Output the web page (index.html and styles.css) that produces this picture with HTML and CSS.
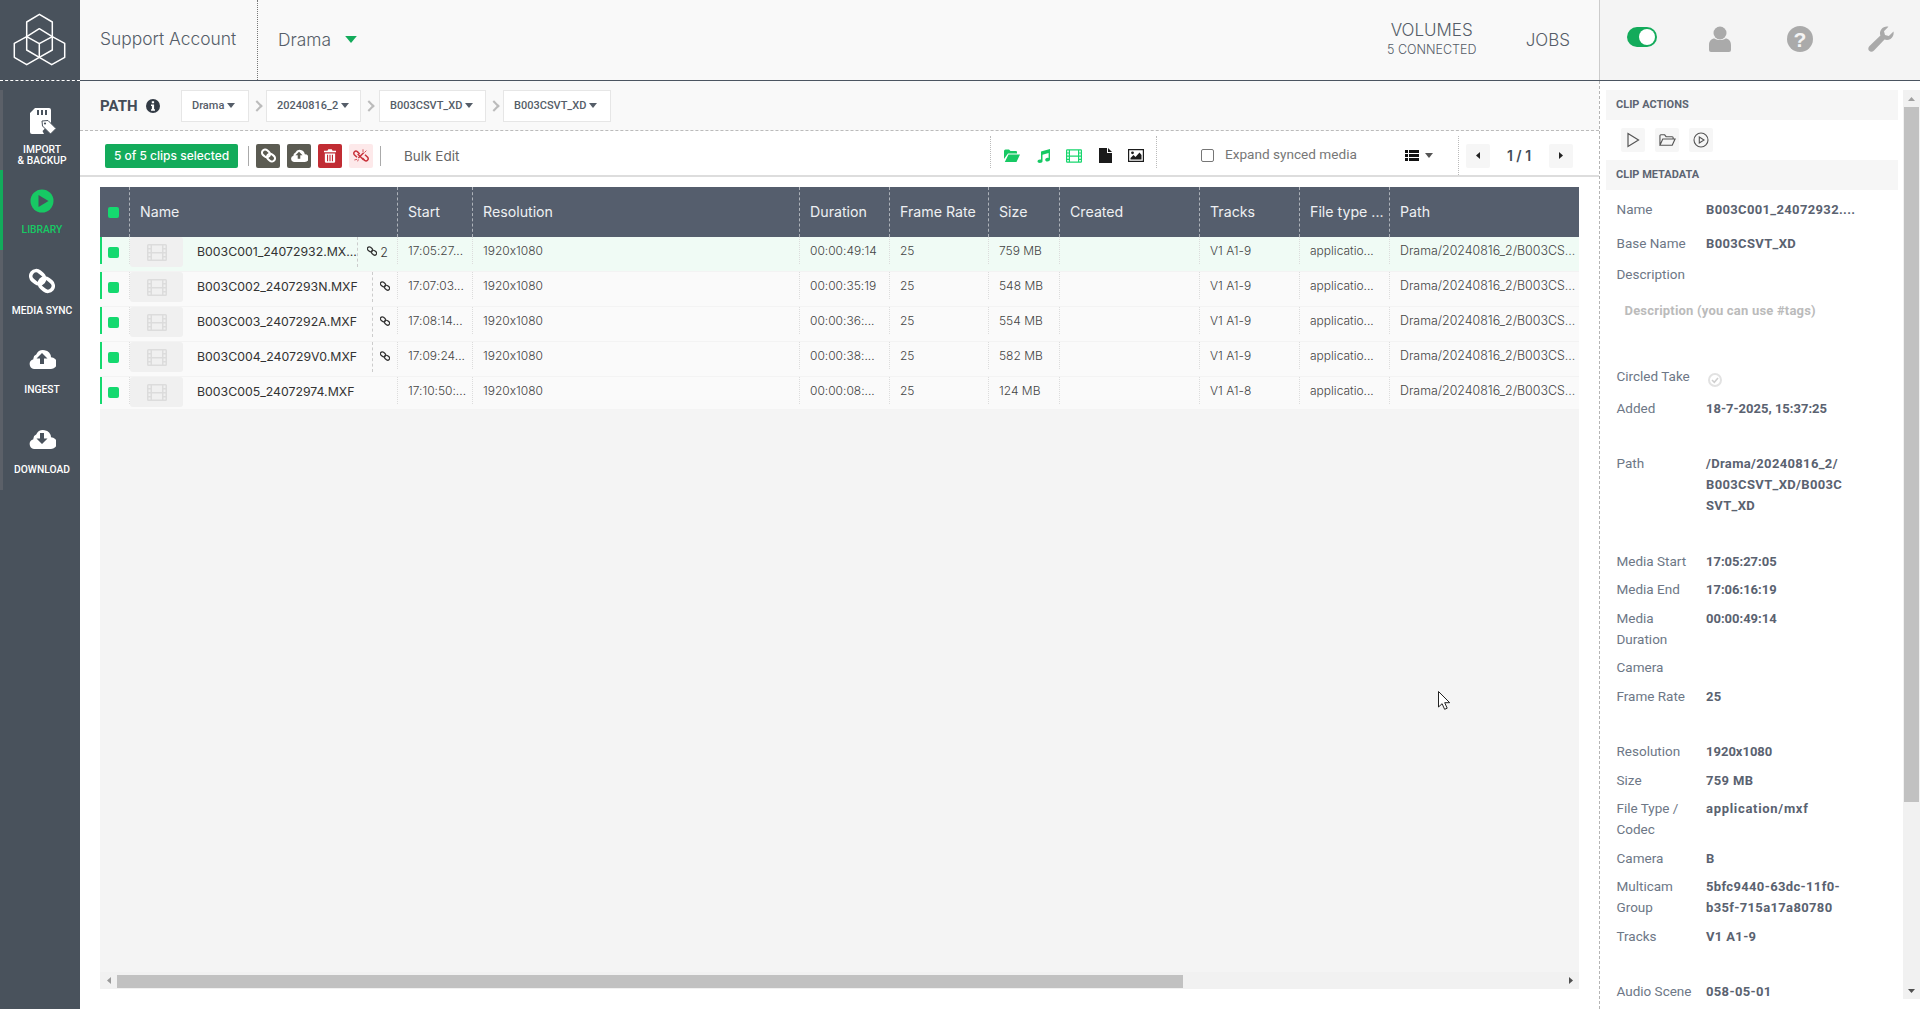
FILE: index.html
```html
<!DOCTYPE html>
<html lang="en">
<head>
<meta charset="utf-8">
<title>Library</title>
<link rel="stylesheet" href="styles.css">
</head>
<body>
<svg class="defs" width="0" height="0" aria-hidden="true">
  <symbol id="i-chain" viewBox="0 0 24 24"><g transform="rotate(40 12 12)" fill="none" stroke="currentColor" stroke-width="3.400"><rect x="0" y="7" width="13.500" height="10" rx="5"/><rect x="10.500" y="7" width="13.500" height="10" rx="5"/></g></symbol>
  <symbol id="i-link-sm" viewBox="0 0 12 12"><g transform="rotate(40 6 6)" fill="none" stroke="currentColor" stroke-width="1.500"><rect x="-.5" y="3.700" width="6.500" height="4.600" rx="2.300"/><rect x="6" y="3.700" width="6.500" height="4.600" rx="2.300"/></g></symbol>
  <symbol id="i-film" viewBox="0 0 20 17"><path fill-rule="evenodd" fill="currentColor" d="M1.500 0h17A1.500 1.500 0 0 1 20 1.500v14a1.500 1.500 0 0 1-1.500 1.500h-17A1.500 1.500 0 0 1 0 15.500v-14A1.500 1.500 0 0 1 1.500 0zM1.500 1.500V4h2V1.500zM1.500 5.500V8h2V5.500zM1.500 9.500V12h2V9.500zM1.500 13.500v2h2v-2zM16.500 1.500V4h2V1.500zM16.500 5.500V8h2V5.500zM16.500 9.500V12h2V9.500zM16.500 13.500v2h2v-2zM5 1.500V8h10V1.500zM5 9.500v6h10v-6z"/></symbol>
  <symbol id="i-cloud" viewBox="0 0 28 20"><path fill="currentColor" d="M23 8.200A7.800 7.800 0 0 0 8.200 5.600 4.500 4.500 0 0 0 5.400 10.200 5 5 0 0 0 6 20h17a5.800 5.800 0 0 0 0-11.800z"/></symbol>
  <symbol id="i-caret" viewBox="0 0 10 6"><path fill="currentColor" d="M0 0h10L5 6z"/></symbol>
</svg>

<div class="app">
  <nav class="sidebar">
    <div class="logo">
      <svg viewBox="0 0 80 80" width="80" height="80"><g fill="none" stroke="#fff" stroke-width="1.500" stroke-linejoin="round"><path d="M26.700 36.700V22l12.700-7.700L52.300 22v14.700"/><path d="M39.300 28.700l13 8V50L39.300 57.300 26.700 50V36.700z"/><path d="M26.700 36.700l12.600 7 13-7M39.300 43.700v13.600"/><path d="M26.700 36.700l-12.400 6.600V57.300l12.400 7.400 12.600-7.400 12.400 7.400 13-7.400V43.300l-12.400-6.600"/></g></svg>
    </div>
    <div class="nav-list">
      <a class="nav-item">
        <svg class="nav-icon" viewBox="0 0 28 28" width="28" height="28"><path fill="#fff" d="M7 1h14a2 2 0 0 1 2 2v12.500L14.500 24 16 27H4a2 2 0 0 1-2-2V6z"/><path fill="#49525c" d="M9 3h2v5H9zM13 3h2v5h-2zM17 3h2v5h-2z"/><path fill="#fff" stroke="#49525c" stroke-width="1" d="M14 14l6-.5 8 8-5.500 5.500-8-8z"/><circle cx="17" cy="16.500" r="1.100" fill="#49525c"/></svg>
        <span class="nav-label">IMPORT<br>&amp; BACKUP</span>
      </a>
      <a class="nav-item nav-item-active">
        <svg class="nav-icon" viewBox="0 0 24 24" width="24" height="24"><circle cx="12" cy="12" r="11.500" fill="#17c964"/><path fill="#49525c" d="M8.500 6l10 6-10 6z"/></svg>
        <span class="nav-label">LIBRARY</span>
      </a>
      <a class="nav-item">
        <svg class="nav-icon" width="26" height="26"><use href="#i-chain"/></svg>
        <span class="nav-label">MEDIA SYNC</span>
      </a>
      <a class="nav-item">
        <svg class="nav-icon cloud" viewBox="0 0 28 20" width="28" height="20"><use href="#i-cloud"/><path fill="#49525c" d="M14 4l5.500 5.500H16V15h-4V9.500H8.500z"/></svg>
        <span class="nav-label">INGEST</span>
      </a>
      <a class="nav-item">
        <svg class="nav-icon cloud" viewBox="0 0 28 20" width="28" height="20"><use href="#i-cloud"/><path fill="#49525c" d="M12 4h4v5.500h3.500L14 15 8.500 9.500H12z"/></svg>
        <span class="nav-label">DOWNLOAD</span>
      </a>
    </div>
  </nav>

  <div class="main">
    <header class="topbar">
      <div class="account">Support Account</div>
      <div class="project">Drama <svg class="project-caret" width="12" height="7"><use href="#i-caret"/></svg></div>
      <div class="top-links">
        <div class="volumes"><div class="volumes-title">VOLUMES</div><div class="volumes-sub">5 CONNECTED</div></div>
        <div class="jobs">JOBS</div>
      </div>
      <div class="top-tools">
        <span class="toggle"><span class="toggle-knob"></span></span>
        <svg class="tool tool-person" viewBox="0 0 22 26" width="22" height="26"><circle cx="11" cy="7" r="6.500" fill="#aaa"/><path fill="#aaa" d="M0 24v-5c0-4 2.500-6.500 5.500-6.500 3 2 8 2 11 0 3 0 5.500 2.500 5.500 6.500v5a2 2 0 0 1-2 2H2a2 2 0 0 1-2-2z"/></svg>
        <svg class="tool tool-help" viewBox="0 0 26 26" width="26" height="26"><circle cx="13" cy="13" r="13" fill="#aaa"/><text x="13" y="20.500" class="help-mark">?</text></svg>
        <svg class="tool tool-wrench" viewBox="0 0 26 26" width="26" height="26"><path fill="#aaa" d="M25.500 5.500c.6 3-.5 5.800-3 7.400-2 1.200-4 1.300-6 .6L6 24.500c-1.500 1.500-3.700 1.500-4.800.3-1.300-1.300-1.200-3.300.3-4.800L12.400 9.600c-.8-2.200-.5-4.500 1-6.400C15 1.100 17.700.2 20.400.7l-4.400 4.500 1 3.800 3.800 1z"/></svg>
      </div>
    </header>

    <div class="workspace">
      <section class="content">
        <div class="pathbar">
          <span class="path-title">PATH</span>
          <svg class="path-info" viewBox="0 0 14 14" width="14" height="14"><circle cx="7" cy="7" r="7" fill="#333b45"/><path fill="#fff" d="M5.800 2.200h2.300v2H5.800zM5 5.500h3.100v4.700H9v1.500H5v-1.500h.9V7H5z"/></svg>
          <div class="crumbs">
            <button class="crumb">Drama <svg class="crumb-caret" width="8" height="5"><use href="#i-caret"/></svg></button>
            <span class="crumb-sep"></span>
            <button class="crumb">20240816_2 <svg class="crumb-caret" width="8" height="5"><use href="#i-caret"/></svg></button>
            <span class="crumb-sep crumb-sep-wide"></span>
            <button class="crumb">B003CSVT_XD <svg class="crumb-caret" width="8" height="5"><use href="#i-caret"/></svg></button>
            <span class="crumb-sep"></span>
            <button class="crumb">B003CSVT_XD <svg class="crumb-caret" width="8" height="5"><use href="#i-caret"/></svg></button>
          </div>
        </div>

        <div class="toolbar">
          <span class="badge">5 of 5 clips selected</span>
          <span class="tb-sep"></span>
          <button class="tb-btn tb-dark"><svg width="15" height="15"><use href="#i-chain"/></svg></button>
          <button class="tb-btn tb-dark"><svg viewBox="0 0 28 20" width="18" height="13"><use href="#i-cloud"/><path fill="#5b5b52" d="M14 4l5.500 5.500H16V15h-4V9.500H8.500z"/></svg></button>
          <button class="tb-btn tb-red"><svg viewBox="0 0 14 16" width="12" height="14"><path fill="#fff" d="M5 0h4l1 2h4v1.500H0V2h4zM1 5h12v9.500a1.500 1.500 0 0 1-1.500 1.500h-9A1.500 1.500 0 0 1 1 14.500z"/><path fill="#c12c33" d="M3.500 6.500h1.300V14H3.500zM6.350 6.500h1.300V14h-1.300zM9.200 6.500h1.300V14H9.200z"/></svg></button>
          <button class="tb-btn tb-pink"><svg viewBox="0 0 24 24" width="16" height="16"><g fill="none" stroke="#c8323a" stroke-width="2.200"><path d="M10 9L6.500 5.500a3.200 3.200 0 0 0-4.500 4.500l4 4"/><path d="M14 15l3.500 3.500a3.200 3.200 0 0 0 4.500-4.500l-4-4"/><path d="M7 9l9 9M8 15l8-8"/></g><path stroke="#c8323a" stroke-width="1.200" d="M15 2v4M20 4l-3 3M2 18l4-1M7 20l1-3"/></svg></button>
          <span class="tb-sep tb-sep-end"></span>
          <span class="bulk">Bulk Edit</span>
          <div class="tb-filters">
            <svg class="f-icon" viewBox="0 0 16 13" width="16" height="13"><path fill="#17c964" d="M0 2a1.500 1.500 0 0 1 1.500-1.500H5L6.500 2H12a1 1 0 0 1 1 1v1.500H4L0 10zM4.500 5.500H16L12.500 13H.8z"/></svg>
            <svg class="f-icon" viewBox="0 0 13 14" width="13" height="14"><path fill="#17c964" d="M4 2.500L13 0v10.500c0 1.200-1.200 2-2.600 2s-2.200-.8-2.200-1.800 1-2 2.400-2c.4 0 .8 0 1 .2V4L5.500 5.700v6.600c0 1-1.100 1.700-2.600 1.700S.5 13.300.5 12.300s1-1.900 2.400-1.900c.4 0 .8.100 1.100.2z"/></svg>
            <svg class="f-icon f-film" width="16" height="14"><use href="#i-film"/></svg>
            <svg class="f-icon" viewBox="0 0 13 15" width="13" height="15"><path fill="#1b1b1b" d="M0 0h8v5h5v10H0zM9 0l4 4H9z"/></svg>
            <svg class="f-icon" viewBox="0 0 16 13" width="16" height="13"><path fill-rule="evenodd" fill="#1b1b1b" d="M0 0h16v13H0zM1.200 1.200v10.600h13.600V1.200z"/><path fill="#1b1b1b" d="M2.500 10.500V9l3-3 2 2 4-4.500 2 2.500v4.500z"/><circle cx="4.500" cy="3.800" r="1.400" fill="#1b1b1b"/></svg>
          </div>
          <label class="expand"><span class="check-box"></span>Expand synced media</label>
          <span class="view-toggle">
            <svg viewBox="0 0 14 11" width="14" height="11"><path fill="#111" d="M0 0h3v3H0zM4 0h10v3H4zM0 4h3v3H0zM4 4h10v3H4zM0 8h3v3H0zM4 8h10v3H4z"/></svg>
            <svg width="8" height="5"><use href="#i-caret"/></svg>
          </span>
          <div class="pager">
            <button class="pg-btn"><svg viewBox="0 0 4 7" width="4" height="7"><path fill="#222" d="M4 0v7L0 3.500z"/></svg></button>
            <span class="pg-text">1 / 1</span>
            <button class="pg-btn"><svg viewBox="0 0 4 7" width="4" height="7"><path fill="#222" d="M0 0v7l4-3.500z"/></svg></button>
          </div>
        </div>

        <div class="table-wrap">
          <div class="table">
            <div class="t-row t-head">
              <div class="h-cell h-check"><span class="sel"></span></div>
              <div class="h-cell">Name</div>
              <div class="h-cell">Start</div>
              <div class="h-cell">Resolution</div>
              <div class="h-cell">Duration</div>
              <div class="h-cell">Frame Rate</div>
              <div class="h-cell">Size</div>
              <div class="h-cell">Created</div>
              <div class="h-cell">Tracks</div>
              <div class="h-cell">File type ...</div>
              <div class="h-cell">Path</div>
            </div>
            <div class="t-body">
              <div class="t-row b-row b-row-first">
                <div class="mark"><span class="sel"></span></div>
                <div class="cell name-cell"><span class="thumb"><svg width="20" height="17"><use href="#i-film"/></svg></span><span class="clip-name">B003C001_24072932.MX...</span><span class="sync sync-wide"><svg width="10" height="10"><use href="#i-link-sm"/></svg> 2</span></div>
                <div class="cell">17:05:27...</div><div class="cell">1920x1080</div><div class="cell">00:00:49:14</div><div class="cell">25</div><div class="cell">759 MB</div><div class="cell"></div><div class="cell">V1 A1-9</div><div class="cell">applicatio...</div><div class="cell cell-path">Drama/20240816_2/B003CS...</div>
              </div>
              <div class="t-row b-row">
                <div class="mark"><span class="sel"></span></div>
                <div class="cell name-cell"><span class="thumb"><svg width="20" height="17"><use href="#i-film"/></svg></span><span class="clip-name">B003C002_2407293N.MXF</span><span class="sync"><svg width="10" height="10"><use href="#i-link-sm"/></svg></span></div>
                <div class="cell">17:07:03...</div><div class="cell">1920x1080</div><div class="cell">00:00:35:19</div><div class="cell">25</div><div class="cell">548 MB</div><div class="cell"></div><div class="cell">V1 A1-9</div><div class="cell">applicatio...</div><div class="cell cell-path">Drama/20240816_2/B003CS...</div>
              </div>
              <div class="t-row b-row">
                <div class="mark"><span class="sel"></span></div>
                <div class="cell name-cell"><span class="thumb"><svg width="20" height="17"><use href="#i-film"/></svg></span><span class="clip-name">B003C003_2407292A.MXF</span><span class="sync"><svg width="10" height="10"><use href="#i-link-sm"/></svg></span></div>
                <div class="cell">17:08:14...</div><div class="cell">1920x1080</div><div class="cell">00:00:36:...</div><div class="cell">25</div><div class="cell">554 MB</div><div class="cell"></div><div class="cell">V1 A1-9</div><div class="cell">applicatio...</div><div class="cell cell-path">Drama/20240816_2/B003CS...</div>
              </div>
              <div class="t-row b-row">
                <div class="mark"><span class="sel"></span></div>
                <div class="cell name-cell"><span class="thumb"><svg width="20" height="17"><use href="#i-film"/></svg></span><span class="clip-name">B003C004_240729V0.MXF</span><span class="sync"><svg width="10" height="10"><use href="#i-link-sm"/></svg></span></div>
                <div class="cell">17:09:24...</div><div class="cell">1920x1080</div><div class="cell">00:00:38:...</div><div class="cell">25</div><div class="cell">582 MB</div><div class="cell"></div><div class="cell">V1 A1-9</div><div class="cell">applicatio...</div><div class="cell cell-path">Drama/20240816_2/B003CS...</div>
              </div>
              <div class="t-row b-row b-row-last">
                <div class="mark"><span class="sel"></span></div>
                <div class="cell name-cell"><span class="thumb"><svg width="20" height="17"><use href="#i-film"/></svg></span><span class="clip-name">B003C005_24072974.MXF</span></div>
                <div class="cell">17:10:50:...</div><div class="cell">1920x1080</div><div class="cell">00:00:08:...</div><div class="cell">25</div><div class="cell">124 MB</div><div class="cell"></div><div class="cell">V1 A1-8</div><div class="cell">applicatio...</div><div class="cell cell-path">Drama/20240816_2/B003CS...</div>
              </div>
            </div>
            <div class="hscroll">
              <span class="hs-arrow"><svg viewBox="0 0 4 7" width="4" height="7"><path fill="#9a9a9a" d="M4 0v7L0 3.500z"/></svg></span>
              <span class="hs-thumb"></span>
              <span class="hs-arrow hs-arrow-end"><svg viewBox="0 0 4 7" width="4" height="7"><path fill="#505050" d="M0 0v7l4-3.500z"/></svg></span>
            </div>
          </div>
        </div>
      </section>

      <aside class="panel">
        <div class="panel-body">
          <h3 class="panel-head">CLIP ACTIONS</h3>
          <div class="actions">
            <button class="act"><svg viewBox="0 0 14 16" width="14" height="16"><path fill="none" stroke="#555" stroke-width="1.200" d="M2 1.500l10.500 6.500L2 14.500z"/></svg></button>
            <button class="act"><svg viewBox="0 0 18 14" width="17" height="14"><path fill="none" stroke="#555" stroke-width="1.200" d="M1 12V2.500A1 1 0 0 1 2 1.500h4l1.500 2H14a1 1 0 0 1 1 1V6M1 12.500L4 6h13l-3 6.500z"/></svg></button>
            <button class="act"><svg viewBox="0 0 16 16" width="16" height="16"><circle cx="8" cy="8" r="7" fill="none" stroke="#555" stroke-width="1.100"/><path fill="none" stroke="#555" stroke-width="1.100" d="M6.300 5l4.700 3-4.700 3z"/></svg></button>
          </div>
          <h3 class="panel-head panel-head-meta">CLIP METADATA</h3>
          <dl class="meta">
            <div class="m-row m-name"><dt>Name</dt><dd>B003C001_24072932....</dd></div>
            <div class="m-row m-base"><dt>Base Name</dt><dd>B003CSVT_XD</dd></div>
            <div class="m-row m-desc"><dt>Description</dt><dd></dd></div>
            <div class="m-placeholder">Description (you can use #tags)</div>
            <div class="m-row m-circled"><dt>Circled Take</dt><dd><svg class="circled" viewBox="0 0 14 14" width="14" height="14"><circle cx="7" cy="7" r="6" fill="none" stroke="#e2e2e2" stroke-width="2"/><path fill="none" stroke="#cfcfcf" stroke-width="1.600" d="M4 7l2.300 2.300L10 5"/></svg></dd></div>
            <div class="m-row m-gap"><dt>Added</dt><dd class="m-tight">18-7-2025, 15:37:25</dd></div>
            <div class="m-row m-gap"><dt>Path</dt><dd>/Drama/20240816_2/<br>B003CSVT_XD/B003C<br>SVT_XD</dd></div>
            <div class="m-row"><dt>Media Start</dt><dd class="m-tight">17:05:27:05</dd></div>
            <div class="m-row"><dt>Media End</dt><dd class="m-tight">17:06:16:19</dd></div>
            <div class="m-row"><dt>Media<br>Duration</dt><dd class="m-tight">00:00:49:14</dd></div>
            <div class="m-row"><dt>Camera</dt><dd></dd></div>
            <div class="m-row m-gap"><dt>Frame Rate</dt><dd>25</dd></div>
            <div class="m-row"><dt>Resolution</dt><dd class="m-tight">1920x1080</dd></div>
            <div class="m-row"><dt>Size</dt><dd>759 MB</dd></div>
            <div class="m-row"><dt>File Type /<br>Codec</dt><dd class="m-loose">application/mxf</dd></div>
            <div class="m-row"><dt>Camera</dt><dd>B</dd></div>
            <div class="m-row"><dt>Multicam<br>Group</dt><dd>5bfc9440-63dc-11f0-<br>b35f-715a17a80780</dd></div>
            <div class="m-row m-gap"><dt>Tracks</dt><dd>V1 A1-9</dd></div>
            <div class="m-row"><dt>Audio Scene</dt><dd>058-05-01</dd></div>
          </dl>
        </div>
        <div class="vscroll">
          <span class="vs-arrow"><svg viewBox="0 0 7 4" width="7" height="4"><path fill="#a0a0a0" d="M0 4h7L3.500 0z"/></svg></span>
          <span class="vs-thumb"></span>
          <span class="vs-arrow vs-arrow-end"><svg viewBox="0 0 7 4" width="7" height="4"><path fill="#505050" d="M0 0h7L3.500 4z"/></svg></span>
        </div>
      </aside>
    </div>
  </div>
  <svg class="cursor" viewBox="0 0 12 19" width="12" height="19"><path fill="#fff" stroke="#222" stroke-width="1" d="M.5.500v15.500l3.600-3.300 2.500 5.600 2.600-1.100-2.500-5.500h5z"/></svg>
</div>
</body>
</html>
```

FILE: styles.css
```css
* { box-sizing: border-box; }
html, body { margin: 0; height: 100%; overflow: hidden; }
body { font-family: "Inter", "Liberation Sans", sans-serif; font-feature-settings: "calt" 0; color: #555; background: #fff; }
button { font: inherit; border: 0; padding: 0; cursor: pointer; }
.defs { position: absolute; }

.app { position: relative; display: flex; width: 1920px; height: 1009px; }

/* sidebar */
.sidebar { width: 80px; flex: none; background: #49525c; display: flex; flex-direction: column; }
.logo { height: 81px; border-bottom: 1px dashed #fff; }
.logo svg { display: block; }
.nav-list { margin-top: 9px; border-left: 3px solid #5b6068; display: flex; flex-direction: column; }
.nav-item { height: 80px; margin-left: -3px; border-left: 3px solid transparent; display: flex; flex-direction: column; align-items: center; color: #fff; padding-left: 1px; position: relative; }
.nav-item-active { border-left-color: #13ab5b; color: #17c964; }
.nav-icon { display: block; margin-top: 17px; flex: none; height: 28px; }
.nav-icon.cloud { margin-top: 19px; height: 20px; }
.nav-item:nth-child(2) .nav-icon { margin-top: 19px; height: 24px; }
.nav-item:nth-child(3) .nav-icon { margin-top: 18px; height: 26px; }
.nav-label { font-family: "Roboto", sans-serif; font-size: 10.300px; line-height: 11px; font-weight: 500; text-align: center; margin-top: 10px; }
.nav-item:nth-child(1) .nav-label { margin-top: 9px; }
.nav-item:nth-child(2) .nav-label { margin-top: 11px; }
.nav-item:nth-child(3) .nav-label { margin-top: 11px; }
.nav-item.nav-item .cloud + .nav-label { margin-top: 15px; }

/* top bar */
.main { flex: 1; min-width: 0; display: flex; flex-direction: column; }
.topbar { height: 81px; flex: none; background: #f9f9f9; border-bottom: 1px solid #4b5561; display: flex; align-items: stretch; }
.account { width: 178px; padding-left: 20px; border-right: 1px dotted #777; font-size: 17.400px; font-weight: 300; line-height: 78px; color: #555d68; white-space: nowrap; }
.project { padding-left: 20px; padding-bottom: 2px; font-size: 17.400px; font-weight: 300; color: #555d68; display: flex; align-items: center; gap: 14px; }
.project-caret { color: #13ab5b; }
.top-links { margin-left: auto; display: flex; align-items: center; color: #555d68; font-weight: 300; }
.volumes { text-align: center; width: 92px; margin-top: -2px; }
.volumes-title { font-size: 17px; line-height: 20px; }
.volumes-sub { font-size: 12.500px; line-height: 16px; margin-top: 2px; }
.jobs { font-size: 17px; margin-left: 48px; margin-right: 29px; }
.top-tools { width: 321px; background: #f4f4f4; border-left: 1px solid #ccc; display: flex; align-items: center; position: relative; }
.toggle { width: 30px; height: 20px; border-radius: 10px; background: #13ab5b; margin-left: 27px; margin-top: -7px; display: block; padding: 2px 1px 2px 12px; flex: none; }
.toggle-knob { display: block; width: 16px; height: 16px; border-radius: 50%; background: #fff; }
.tool { flex: none; margin-top: -2px; }
.tool-person { margin-left: 52px; }
.tool-help { margin-left: 56px; }
.tool-wrench { margin-left: 55px; }
.help-mark { font-family: "Liberation Sans", sans-serif; font-size: 21px; font-weight: 700; fill: #f4f4f4; text-anchor: middle; }

/* workspace */
.workspace { flex: 1; min-height: 0; display: flex; }
.content { width: 1520px; flex: none; border-right: 1px dashed #b5b5b5; display: flex; flex-direction: column; }
.pathbar { height: 50px; flex: none; background: #f9f9f9; border-bottom: 1px dashed #bbb; display: flex; align-items: center; padding-left: 20px; }
.path-title { font-family: "Roboto", sans-serif; font-weight: 700; font-size: 15px; color: #444c57; width: 46px; }
.path-info { flex: none; }
.crumbs { display: flex; align-items: center; margin-left: 21px; }
.crumb { height: 32px; padding: 0 0 1px 10px; background: #fff; border: 1px solid #e6e6e6; font-family: "Roboto", sans-serif; font-size: 11px; font-weight: 500; color: #555d68; display: flex; align-items: center; gap: 3px; white-space: nowrap; }
.crumb:nth-child(1) { width: 68px; }
.crumb:nth-child(3) { width: 95px; }
.crumb:nth-child(5) { width: 107px; }
.crumb:nth-child(7) { width: 108px; }
.crumb-caret { color: #555d68; flex: none; }
.crumb-sep { width: 17px; height: 10px; position: relative; flex: none; }
.crumb-sep-wide { width: 18px; }
.crumb-sep::before { content: ""; position: absolute; left: 4px; top: 1px; width: 6px; height: 6px; border-top: 2px solid #bbb; border-right: 2px solid #bbb; transform: rotate(45deg); }

.toolbar { height: 46px; flex: none; background: #fff; border-bottom: 2px solid #ddd; display: flex; align-items: center; padding: 5px 0 0 25px; }
.badge { width: 133px; height: 24px; background: #13ab5b; border-radius: 2px; color: #fff; font-size: 12px; font-weight: 500; line-height: 24px; text-align: center; flex: none; }
.tb-sep { width: 1px; height: 20px; background: #aaa; margin: 0 7px 0 10px; flex: none; }
.tb-sep-end { margin-left: 7px; margin-right: 0; }
.tb-btn { width: 24px; height: 24px; border-radius: 2px; margin-right: 7px; display: flex; align-items: center; justify-content: center; color: #fff; flex: none; }
.tb-dark { background: #5b5b52; }
.tb-red { background: #c12c33; }
.tb-pink { background: #fde9ea; margin-right: 0; }
.bulk { font-size: 13.500px; color: #666; margin-left: 23px; width: 65px; white-space: nowrap; }
.tb-filters { margin-left: 521px; width: 167px; height: 32px; align-self: flex-start; border-left: 1px dotted #bbb; border-right: 1px dotted #bbb; display: flex; align-items: center; padding: 7px 0 0 13px; flex: none; }
.f-icon { flex: none; margin-right: 16.500px; }
.f-film { color: #17d66d; }
.expand { display: flex; align-items: center; font-family: "Roboto", sans-serif; font-size: 13.600px; color: #777; margin-left: 44px; width: 203.500px; margin-top: -3px; white-space: nowrap; }
.check-box { width: 13px; height: 13px; border: 1px solid #767676; border-radius: 2px; background: #fff; margin-right: 11px; margin-top: 3px; flex: none; }
.view-toggle { display: flex; align-items: center; gap: 6px; width: 53px; flex: none; }
.pager { height: 39px; align-self: flex-start; padding-left: 7px; border-left: 1px dotted #bbb; display: flex; align-items: center; flex: none; }
.pg-btn { width: 24px; height: 24px; background: #f6f6f6; border-radius: 2px; display: flex; align-items: center; justify-content: center; flex: none; }
.pg-text { width: 59px; text-align: center; font-size: 14px; font-weight: 600; color: #444c57; }

/* table */
.table-wrap { flex: 1; min-height: 0; padding: 10px 20px 20px 20px; background: #fff; }
.table { height: 100%; display: flex; flex-direction: column; }
.t-row { display: grid; grid-template-columns: 29px 268px 75px 327px 90px 99px 71px 140px 100px 90px 190px; }
.t-head { height: 50px; flex: none; background: #555e6d; color: #eef0f2; }
.h-cell { border-left: 1px dashed #aeb3ba; padding-left: 10px; font-size: 14.200px; line-height: 49px; white-space: nowrap; overflow: hidden; }
.h-check { border-left: 0; padding: 20px 0 0 8px; }
.sel { display: block; width: 11px; height: 11px; border-radius: 2px; background: #15d96f; }
.t-body { flex: 1; min-height: 0; background: #f4f4f4; }
.b-row { height: 35px; background: #fafafa; border-bottom: 1px solid #f3f3f3; }
.b-row-first { background: #f0fbf5; }
.b-row-last { height: 32px; border-bottom: 0; }
.mark { height: 27px; border-left: 2px solid #15d96f; padding: 10px 0 0 6px; }
.cell { height: 27px; border-left: 1px dotted #dcdcdc; padding-left: 10px; font-size: 12px; font-weight: 300; line-height: 27px; color: #444; white-space: nowrap; overflow: hidden; }
.cell-path { font-size: 12.400px; }
.name-cell { overflow: visible; display: flex; padding-left: 0; position: relative; border-left: 1px dotted #dcdcdc; }
.thumb { width: 53px; height: 30px; background: #f0f0f0; border-radius: 3px; display: flex; align-items: center; justify-content: center; color: #dcdcdc; flex: none; margin-top: 0; }
.clip-name { margin-left: 14px; font-size: 12.300px; font-weight: 400; color: #333; line-height: 30px; }
.sync { position: absolute; right: 0; top: 0; width: 25px; height: 30px; border-left: 1px dashed #ccc; display: flex; align-items: center; justify-content: center; color: #333; font-size: 12.500px; gap: 3px; }
.sync svg { margin-top: -3px; }
.sync-wide { width: 40px; }
.hscroll { height: 17px; flex: none; background: #f1f1f1; display: flex; align-items: center; }
.hs-arrow { width: 17px; display: flex; justify-content: center; flex: none; }
.hs-thumb { width: 1066px; height: 13px; background: #c1c1c1; flex: none; margin-top: 1px; }
.hs-arrow-end { margin-left: auto; }

/* side panel */
.panel { flex: 1; min-width: 0; display: flex; overflow: hidden; background: #fff; }
.panel-body { width: 303px; flex: none; padding: 9px 5px 0 6px; overflow: hidden; }
.panel-head { margin: 0; height: 30px; background: #f6f6f6; font-family: "Roboto", sans-serif; font-size: 11px; line-height: 29px; font-weight: 700; color: #5d6572; padding-left: 10px; }
.actions { display: flex; gap: 10px; padding: 8px 0 8px 15px; }
.act { width: 24px; height: 24px; background: #f6f6f6; border-radius: 2px; display: flex; align-items: center; justify-content: center; }
.meta { margin: 8.500px 0 0 10.500px; font-family: "Roboto", sans-serif; font-size: 14px; line-height: 21px; }
.m-row { display: grid; grid-template-columns: 89.500px 1fr; margin-bottom: 7.500px; }
.m-row dt { color: #6d7786; font-size: 13.500px; }
.m-row dd { margin: 0; color: #5a6270; font-weight: 700; font-size: 13px; white-space: nowrap; letter-spacing: .35px; }
.m-row .m-tight { letter-spacing: 0; }
.m-row .m-loose { letter-spacing: .7px; }
.m-name { margin-bottom: 13px; }
.m-base { margin-bottom: 10px; }
.m-desc { margin-bottom: 15px; }
.m-placeholder { margin-left: 8px; height: 21px; color: #bbb; font-weight: 700; font-size: 13px; letter-spacing: .2px; margin-bottom: 45px; }
.m-circled { margin-bottom: 11px; }
.circled { margin-top: 7px; margin-left: 2px; display: block; }
.m-row.m-gap { margin-bottom: 34.500px; }
.vscroll { width: 17px; flex: none; height: 909px; margin-top: 9px; background: #f1f1f1; display: flex; flex-direction: column; align-items: center; }
.vs-arrow { height: 17px; display: flex; align-items: center; justify-content: center; flex: none; }
.vs-thumb { width: 15px; height: 695px; background: #c1c1c1; flex: none; }
.vs-arrow-end { margin-top: auto; }

.cursor { position: absolute; left: 1438px; top: 691px; }
```
